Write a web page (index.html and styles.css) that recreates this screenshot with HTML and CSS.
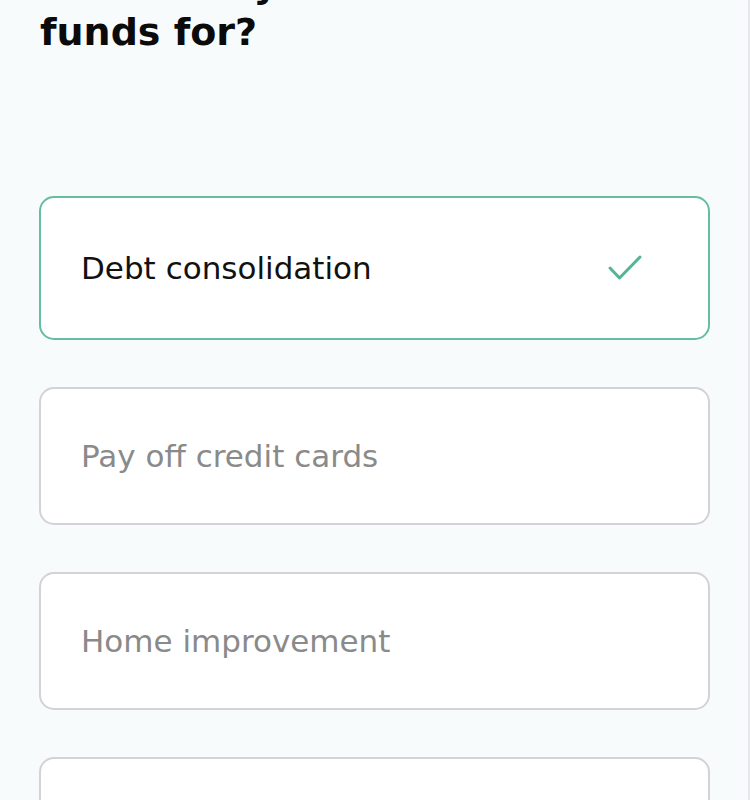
FILE: index.html
```html
<!DOCTYPE html>
<html lang="en">
<head>
<meta charset="utf-8">
<title>Loan purpose</title>
<link rel="stylesheet" href="styles.css">
</head>
<body>
<main class="screen">
  <h1 class="title">What will you use the<br>funds for?</h1>
  <ul class="options">
    <li class="option option--selected">
      <span class="option__label">Debt consolidation</span>
      <svg class="option__check" width="36" height="28" viewBox="0 0 36 28" aria-hidden="true">
        <path d="M3 14 L12.5 24 L33 3" fill="none" stroke="#55b491" stroke-width="3" stroke-linecap="round" stroke-linejoin="round"/>
      </svg>
    </li>
    <li class="option"><span class="option__label">Pay off credit cards</span></li>
    <li class="option"><span class="option__label">Home improvement</span></li>
    <li class="option"><span class="option__label">Major purchase</span></li>
  </ul>
</main>
</body>
</html>
```
FILE: styles.css
```css
html, body {
  margin: 0;
  padding: 0;
  background: #f8fbfc;
  overflow: hidden;
}
.screen {
  display: flow-root;
  min-height: 100vh;
  box-sizing: border-box;
  border-right: 2px solid #e6e7ea;
  padding: 0 38px 0 39px;
  font-family: "DejaVu Sans", "Liberation Sans", sans-serif;
}
.title {
  margin: -40px 0 0 1px;
  font-size: 38px;
  line-height: 48px;
  font-weight: 700;
  color: #0b0b0b;
}
.options {
  list-style: none;
  margin: 140px 0 0;
  padding: 0;
  display: flex;
  flex-direction: column;
  gap: 47px;
}
.option {
  box-sizing: border-box;
  height: 138px;
  background: #ffffff;
  border: 2px solid #d3d3d7;
  border-radius: 15px;
  padding: 0 40px 0 40px;
  display: flex;
  align-items: center;
  justify-content: space-between;
}
.option--selected {
  height: 144px;
  border-color: #66bd9f;
}
.option__label {
  font-size: 31px;
  font-weight: 400;
  color: #8a8a8a;
}
.option--selected .option__label {
  color: #111111;
}
.option__check {
  margin-right: 25px;
}
```
